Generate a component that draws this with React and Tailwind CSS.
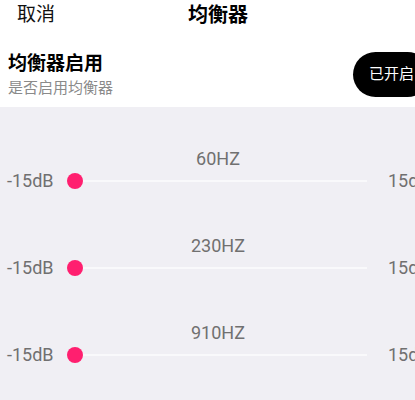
const bands = ['60HZ', '230HZ', '910HZ'];

const cjk = { fontFamily: 'Roboto, "Noto Sans CJK SC", sans-serif' };

const BandSlider = ({ label }) => (
  <div className="flex flex-col">
    <div className="text-center text-[18px] leading-[22px] text-[#707070]">{label}</div>
    <div className="flex items-center h-[22px] pl-[7px]">
      <span className="w-[60px] text-[18px] leading-[22px] text-[#707070]">-15dB</span>
      <div className="relative w-[300px] h-[16px] flex items-center">
        <div className="w-full h-[2px] bg-[#f9f9fb]" />
        <div className="absolute left-0 top-0 w-[16px] h-[16px] rounded-full bg-[#ff1f6f]" />
      </div>
      <span className="ml-[21px] text-[18px] leading-[22px] text-[#707070] whitespace-nowrap">15dB</span>
    </div>
  </div>
);

export default function App() {
  return (
    <div className="w-[415px] min-h-[400px] overflow-hidden bg-[#f0eff4]" style={cjk}>
      <div className="w-[436px]">
        <header className="grid grid-cols-[1fr_auto_1fr] items-center h-[30px] bg-white">
          <span className="pl-[17px] text-[19px] text-[#111]">取消</span>
          <span className="text-[20px] font-bold text-black">均衡器</span>
          <span />
        </header>

        <div className="flex items-center justify-between bg-white pt-[21px] pb-[9px] pl-[8px] pr-[6px]">
          <div className="flex flex-col">
            <span className="text-[19px] leading-[25px] font-bold text-black">均衡器启用</span>
            <span className="mt-[2px] text-[15px] leading-[20px] text-[#8a8a8a]">是否启用均衡器</span>
          </div>
          <button className="h-[45px] px-4 rounded-full bg-black text-white text-[15px]">已开启</button>
        </div>

        <div className="flex flex-col gap-[43px] pt-[41px] pb-[20px]">
          {bands.map(b => (
            <BandSlider key={b} label={b} />
          ))}
        </div>
      </div>
    </div>
  );
}
